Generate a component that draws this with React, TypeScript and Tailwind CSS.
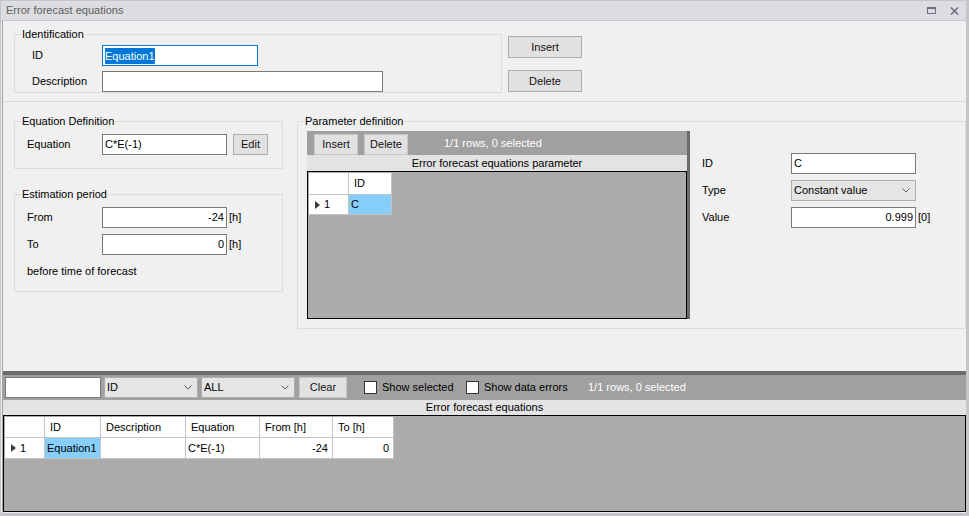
import React from "react";

type Kids = { className?: string; children?: React.ReactNode };

function Group({ title, className = "", children }: Kids & { title: string }) {
  return (
    <div className={`relative shrink-0 border border-[#dcdcdc] ${className}`}>
      <span className="absolute -top-[7px] left-[6px] bg-[#f0f0f0] px-px leading-[13px]">{title}</span>
      {children}
    </div>
  );
}

function Box({ className = "", right = false, children }: Kids & { right?: boolean }) {
  return (
    <div
      className={`h-[21px] shrink-0 flex items-center bg-white border px-[2px] ${
        right ? "justify-end" : ""
      } ${className}`}
    >
      {children}
    </div>
  );
}

function Chevron() {
  return (
    <svg width="8" height="5" viewBox="0 0 8 5" className="shrink-0">
      <path d="M0.5 0.5 L4 4 L7.5 0.5" fill="none" stroke="#606060" strokeWidth="1" />
    </svg>
  );
}

function Combo({ className = "", children }: Kids) {
  return (
    <div
      className={`h-[21px] shrink-0 flex items-center justify-between bg-[#e5e5e5] border border-[#adadad] pl-[2px] pr-[5px] ${className}`}
    >
      <span>{children}</span>
      <Chevron />
    </div>
  );
}

function Btn({ className = "", children }: Kids) {
  return (
    <button
      type="button"
      className={`shrink-0 flex items-center justify-center bg-[#e1e1e1] border border-[#adadad] text-[#111] ${className}`}
    >
      {children}
    </button>
  );
}

function Check({ label, className = "" }: { label: string; className?: string }) {
  return (
    <div className={`flex items-center shrink-0 ${className}`}>
      <div className="w-[13px] h-[13px] bg-white border border-[#333]" />
      <span className="ml-[5px]">{label}</span>
    </div>
  );
}

function RowMark() {
  return (
    <svg width="5" height="8" viewBox="0 0 5 8" className="shrink-0">
      <path d="M0 0 L5 4 L0 8 Z" fill="#3a3a3a" />
    </svg>
  );
}

// grid cell: white with light separators on the right/bottom
function Cell({ className = "", children }: Kids) {
  return (
    <div className={`shrink-0 flex items-center bg-white border-r border-b border-[#c4c4c4] ${className}`}>
      {children}
    </div>
  );
}

const bottomCols = [
  { title: "ID", w: "w-[56px]" },
  { title: "Description", w: "w-[85px]" },
  { title: "Equation", w: "w-[74px]" },
  { title: "From [h]", w: "w-[73px]" },
  { title: "To [h]", w: "w-[61px]" },
];

export default function App() {
  return (
    <div className="w-[969px] h-[516px] flex flex-col overflow-hidden bg-[#f0f0f0] border-l border-t border-r-[3px] border-b-[3px] border-[#c4c4cd] font-['Liberation_Sans',Arial,sans-serif] text-[11px] leading-[13px] text-black">
      {/* title bar */}
      <div className="h-[20px] shrink-0 flex items-center bg-[#dcdde1] border-b border-[#c6c6cb] pl-[5px] text-[#5c5c5c]">
        <span>Error forecast equations</span>
        <svg width="9" height="7" viewBox="0 0 9 7" className="ml-auto mr-[14px]">
          <rect x="0.5" y="0.5" width="8" height="6" fill="none" stroke="#6c6c7c" />
          <rect x="0" y="0" width="9" height="2" fill="#6c6c7c" />
        </svg>
        <svg width="9" height="8" viewBox="0 0 9 8" className="mr-[7px]">
          <path d="M1 0.5 L8 7.5 M8 0.5 L1 7.5" stroke="#6c6c7c" strokeWidth="1.6" />
        </svg>
      </div>

      <div className="flex-1 min-h-0 flex flex-col ml-px border-l border-[#a3a3a3]">
        {/* identification */}
        <div className="h-[81px] shrink-0 flex border-b border-[#d9d9d9]">
          <Group title="Identification" className="ml-[11px] mt-[13px] w-[488px] h-[59px]">
            <div className="pt-[10px] pl-[17px] flex flex-col gap-[5px]">
              <div className="flex items-center">
                <span className="w-[70px] shrink-0">ID</span>
                <Box className="w-[156px] border-[#0078d7]">
                  <span className="bg-[#0078d7] text-white leading-[16px]">Equation1</span>
                </Box>
              </div>
              <div className="flex items-center">
                <span className="w-[70px] shrink-0">Description</span>
                <Box className="w-[281px] border-[#7a7a7a]" />
              </div>
            </div>
          </Group>
          <div className="ml-[6px] mt-[15px] flex flex-col gap-[12px]">
            <Btn className="w-[74px] h-[22px]">Insert</Btn>
            <Btn className="w-[74px] h-[22px]">Delete</Btn>
          </div>
        </div>

        {/* definitions */}
        <div className="flex-1 min-h-0 flex">
          <div className="ml-[11px] mt-[19px] w-[269px] flex flex-col">
            <Group title="Equation Definition" className="h-[48px]">
              <div className="pt-[12px] pl-[12px] flex items-center">
                <span className="w-[75px] shrink-0">Equation</span>
                <Box className="w-[125px] border-[#7a7a7a]">C*E(-1)</Box>
                <Btn className="ml-[6px] w-[35px] h-[21px]">Edit</Btn>
              </div>
            </Group>
            <Group title="Estimation period" className="mt-[25px] h-[98px]">
              <div className="pt-[12px] pl-[12px] flex flex-col">
                <div className="flex items-center">
                  <span className="w-[75px] shrink-0">From</span>
                  <Box right className="w-[125px] border-[#7a7a7a]">-24</Box>
                  <span className="ml-[2px]">[h]</span>
                </div>
                <div className="flex items-center mt-[6px]">
                  <span className="w-[75px] shrink-0">To</span>
                  <Box right className="w-[125px] border-[#7a7a7a]">0</Box>
                  <span className="ml-[2px]">[h]</span>
                </div>
                <span className="mt-[10px]">before time of forecast</span>
              </div>
            </Group>
          </div>

          <Group title="Parameter definition" className="ml-[14px] mt-[19px] w-[669px] h-[208px] flex">
            <div className="ml-[9px] mt-[9px] h-[188px] flex">
              <div className="w-[380px] flex flex-col">
                <div className="h-[24px] shrink-0 flex items-start bg-[#a0a0a0]">
                  <Btn className="ml-[7px] mt-[3px] w-[44px] h-[21px] border-[#c6c6c6]">Insert</Btn>
                  <Btn className="ml-[6px] mt-[3px] w-[44px] h-[21px] border-[#c6c6c6]">Delete</Btn>
                  <span className="ml-[36px] self-center text-white">1/1 rows, 0 selected</span>
                </div>
                <div className="h-[16px] shrink-0 flex items-center justify-center bg-[#e3e3e3]">
                  Error forecast equations parameter
                </div>
                <div className="flex-1 border border-black bg-[#ababab] p-px">
                  <div className="flex">
                    <Cell className="w-[40px] h-[22px]" />
                    <Cell className="w-[43px] h-[22px] pl-[5px]">ID</Cell>
                  </div>
                  <div className="flex">
                    <Cell className="w-[40px] h-[20px] pl-[6px]">
                      <RowMark />
                      <span className="ml-[4px]">1</span>
                    </Cell>
                    <Cell className="w-[43px] h-[20px] pl-[2px] !bg-[#87cefa]">C</Cell>
                  </div>
                </div>
              </div>
              <div className="w-[3px] bg-[#6b6b6b]" />
            </div>

            <div className="ml-[12px] mt-[31px] flex flex-col gap-[6px]">
              <div className="flex items-center">
                <span className="w-[89px] shrink-0">ID</span>
                <Box className="w-[125px] border-[#7a7a7a]">C</Box>
              </div>
              <div className="flex items-center">
                <span className="w-[89px] shrink-0">Type</span>
                <Combo className="w-[125px]">Constant value</Combo>
              </div>
              <div className="flex items-center">
                <span className="w-[89px] shrink-0">Value</span>
                <Box right className="w-[125px] border-[#7a7a7a]">0.999</Box>
                <span className="ml-[2px]">[0]</span>
              </div>
            </div>
          </Group>
        </div>

        {/* list of equations */}
        <div className="h-[142px] shrink-0 flex flex-col">
          <div className="h-[4px] shrink-0 bg-[#6b6b6b]" />
          <div className="h-[25px] shrink-0 flex items-center bg-[#a0a0a0]">
            <Box className="ml-[2px] w-[96px] border-[#7a7a7a]" />
            <Combo className="ml-[3px] w-[94px]">ID</Combo>
            <Combo className="ml-[3px] w-[94px]">ALL</Combo>
            <Btn className="ml-[4px] w-[48px] h-[21px] border-[#c6c6c6]">Clear</Btn>
            <Check label="Show selected" className="ml-[17px] w-[102px]" />
            <Check label="Show data errors" className="w-[122px]" />
            <span className="text-white">1/1 rows, 0 selected</span>
          </div>
          <div className="h-[15px] shrink-0 flex items-center justify-center bg-[#e3e3e3]">
            Error forecast equations
          </div>
          <div className="h-[97px] shrink-0 border border-black bg-[#ababab] p-px">
            <div className="flex">
              <Cell className="w-[40px] h-[21px]" />
              {bottomCols.map((c) => (
                <Cell key={c.title} className={`${c.w} h-[21px] pl-[5px]`}>
                  {c.title}
                </Cell>
              ))}
            </div>
            <div className="flex">
              <Cell className="w-[40px] h-[21px] pl-[6px]">
                <RowMark />
                <span className="ml-[4px]">1</span>
              </Cell>
              <Cell className="w-[56px] h-[21px] pl-[2px] !bg-[#87cefa]">Equation1</Cell>
              <Cell className="w-[85px] h-[21px]" />
              <Cell className="w-[74px] h-[21px] pl-[2px]">C*E(-1)</Cell>
              <Cell className="w-[73px] h-[21px] pr-[4px] justify-end">-24</Cell>
              <Cell className="w-[61px] h-[21px] pr-[4px] justify-end">0</Cell>
            </div>
          </div>
        </div>
      </div>
    </div>
  );
}
